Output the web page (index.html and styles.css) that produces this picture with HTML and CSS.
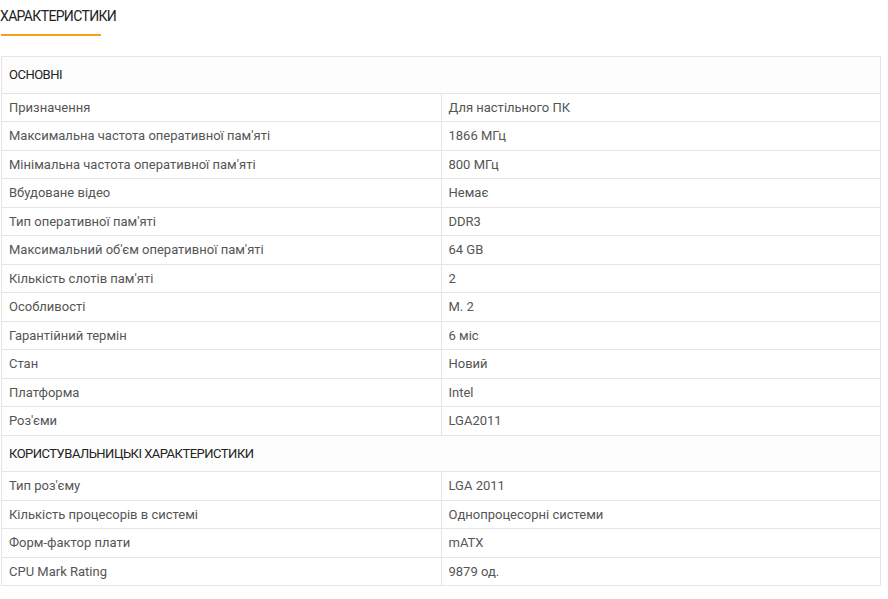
FILE: index.html
```html
<!DOCTYPE html>
<html lang="uk">
<head>
<meta charset="utf-8">
<link rel="stylesheet" href="styles.css">
</head>
<body>
<div class="specs">
  <h2 class="specs-title">Характеристики</h2>
  <table class="specs-table">
    <tbody>
      <tr class="group"><th colspan="2">Основні</th></tr>
      <tr><td>Призначення</td><td>Для настільного ПК</td></tr>
      <tr><td>Максимальна частота оперативної пам'яті</td><td>1866 МГц</td></tr>
      <tr><td>Мінімальна частота оперативної пам'яті</td><td>800 МГц</td></tr>
      <tr><td>Вбудоване відео</td><td>Немає</td></tr>
      <tr><td>Тип оперативної пам'яті</td><td>DDR3</td></tr>
      <tr><td>Максимальний об'єм оперативної пам'яті</td><td>64 GB</td></tr>
      <tr><td>Кількість слотів пам'яті</td><td>2</td></tr>
      <tr><td>Особливості</td><td>M. 2</td></tr>
      <tr><td>Гарантійний термін</td><td>6 міс</td></tr>
      <tr><td>Стан</td><td>Новий</td></tr>
      <tr><td>Платформа</td><td>Intel</td></tr>
      <tr><td>Роз'єми</td><td>LGA2011</td></tr>
      <tr class="group"><th colspan="2">Користувальницькі характеристики</th></tr>
      <tr><td>Тип роз'єму</td><td>LGA 2011</td></tr>
      <tr><td>Кількість процесорів в системі</td><td>Однопроцесорні системи</td></tr>
      <tr><td>Форм-фактор плати</td><td>mATX</td></tr>
      <tr><td>CPU Mark Rating</td><td>9879 од.</td></tr>
    </tbody>
  </table>
</div>
</body>
</html>
```
FILE: styles.css
```css
html, body {
  margin: 0;
  padding: 0;
  background: #fff;
}
body {
  font-family: Roboto, "Liberation Sans", sans-serif;
}
.specs {
  width: 881px;
  padding-top: 6px;
}
.specs-title {
  display: inline-block;
  margin: 0 0 21px 0;
  padding: 0 0 10px 0;
  font-size: 14px;
  line-height: 18px;
  font-weight: 400;
  letter-spacing: -0.65px;
  text-transform: uppercase;
  color: #222;
  position: relative;
}
.specs-title::after {
  content: "";
  position: absolute;
  left: 1px;
  top: 27px;
  width: 100px;
  height: 2px;
  background: #f7a01c;
}
.specs-table {
  margin-left: 1px;
  width: 880px;
  border-collapse: collapse;
  table-layout: fixed;
  font-size: 13px;
  color: #555;
}
.specs-table td,
.specs-table th {
  border: 1px solid #e5e5e5;
  text-align: left;
  vertical-align: middle;
}
.specs-table td {
  width: 50%;
  padding: 5px 7px;
  height: 17.5px;
  line-height: 17.5px;
}
.specs-table th {
  padding: 9px 7px;
  line-height: 17.5px;
  font-weight: 400;
  text-transform: uppercase;
  letter-spacing: -0.5px;
  color: #222;
  background: #fdfdfd;
}
```
